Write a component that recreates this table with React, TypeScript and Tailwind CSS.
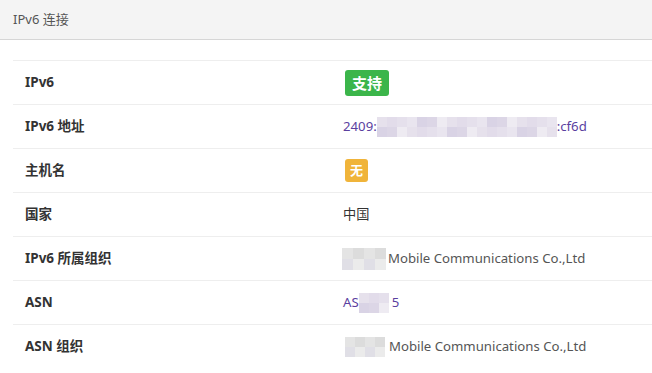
import React from "react";

const F = { fontFamily: '"Noto Sans", "Noto Sans CJK SC", sans-serif' };

function Mosaic({ cols, rows, colors, size = 10 }: { cols: number; rows: number; colors: string[]; size?: number }) {
  const cells = [];
  for (let r = 0; r < rows; r++) {
    for (let c = 0; c < cols; c++) {
      cells.push(
        <span
          key={`${r}-${c}`}
          style={{ background: colors[(r * 5 + c * 3) % colors.length], width: size, height: size }}
          className="block"
        />
      );
    }
  }
  return (
    <span className="inline-grid align-middle" style={{ gridTemplateColumns: `repeat(${cols}, ${size}px)` }}>
      {cells}
    </span>
  );
}

const purple = ["#e6e1ec", "#dcd6e6", "#e9e5ef", "#e2dcea", "#eeebf2", "#d9d3e5", "#e5e0ec"];
const gray = ["#e4e4e4", "#d6d6d6", "#ebebeb", "#dcdcdc", "#efefef", "#e0dfe6"];

function Row({ label, children }: { label: string; children: React.ReactNode }) {
  return (
    <div className="flex h-[44px] items-center border-t border-[#eeeeee]">
      <div className="w-[330px] shrink-0 pl-[12px] text-[13.5px] font-bold text-[#333333]">{label}</div>
      <div className="flex items-center text-[13.2px] text-[#555555]">{children}</div>
    </div>
  );
}

export default function App() {
  return (
    <div className="h-[373px] w-[652px] overflow-hidden bg-white" style={F}>
      <div className="flex h-[40px] items-center border-b border-[#d6d6d6] bg-[#f4f4f4] pl-[13px] text-[13px] text-[#555555]">
        IPv6 连接
      </div>
      <div className="ml-[13px] mt-[20px]">
        <Row label="IPv6">
          <span className="ml-[2px] rounded-[3px] bg-[#3bb54a] px-[7px] py-[2px] text-[15px] font-bold leading-[22px] text-white">支持</span>
        </Row>
        <Row label="IPv6 地址">
          <span className="text-[#5b3f9f]">2409:</span>
          <Mosaic cols={18} rows={2} colors={purple} />
          <span className="text-[#5b3f9f]">:cf6d</span>
        </Row>
        <Row label="主机名">
          <span className="ml-[2px] rounded-[3px] bg-[#f0b43a] px-[5px] text-[13px] font-bold leading-[23px] text-white">无</span>
        </Row>
        <Row label="国家">
          <span className="text-[#333333]">中国</span>
        </Row>
        <Row label="IPv6 所属组织">
          <span className="ml-[-1px]">
            <Mosaic cols={4} rows={2} colors={gray} size={11} />
          </span>
          <span className="ml-[2px]">Mobile Communications Co.,Ltd</span>
        </Row>
        <Row label="ASN">
          <span className="text-[#5b3f9f]">AS</span>
          <Mosaic cols={3} rows={2} colors={purple} />
          <span className="ml-[3px] text-[#5b3f9f]">5</span>
        </Row>
        <Row label="ASN 组织">
          <span className="ml-[2px]">
            <Mosaic cols={4} rows={2} colors={gray} />
          </span>
          <span className="ml-[4px]">Mobile Communications Co.,Ltd</span>
        </Row>
      </div>
    </div>
  );
}
